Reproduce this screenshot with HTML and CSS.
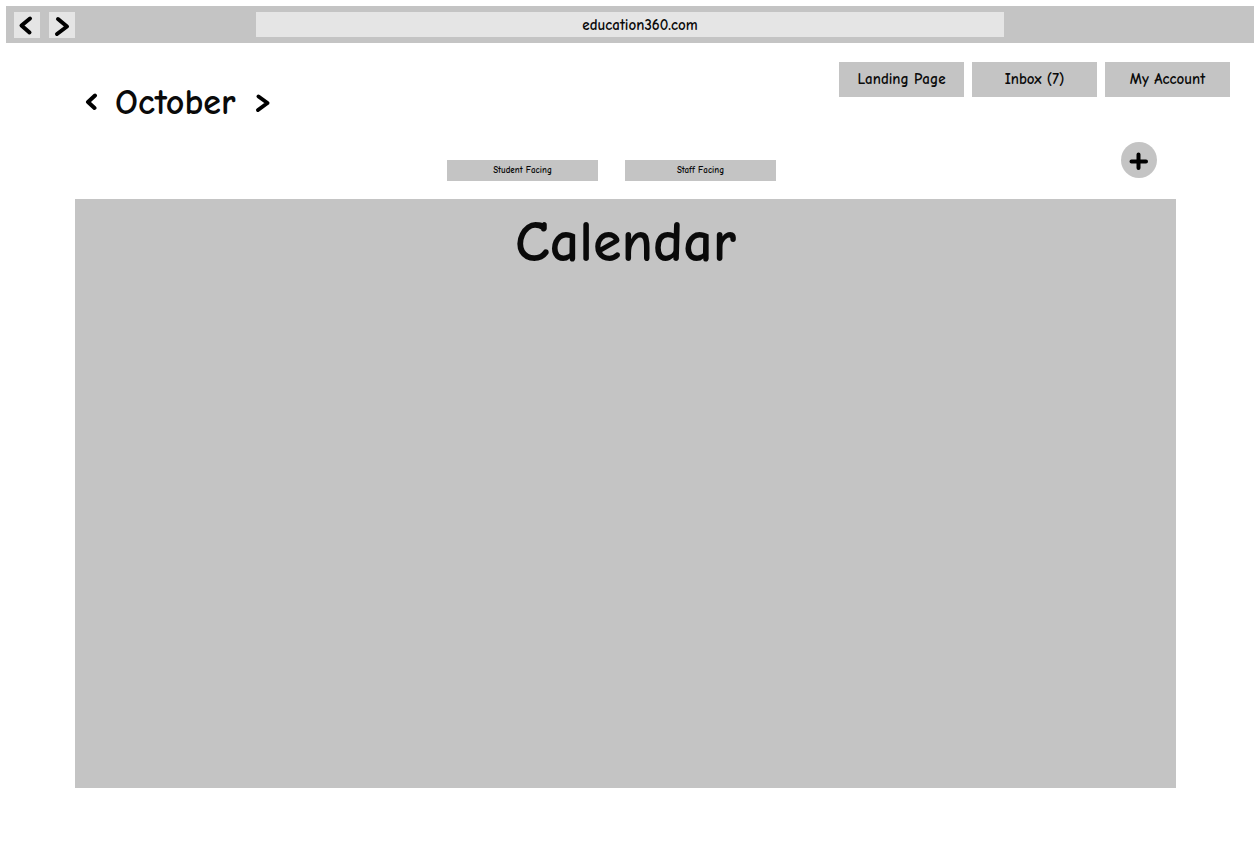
FILE: index.html
```html
<!DOCTYPE html>
<html lang="en">
<head>
  <meta charset="utf-8">
  <meta name="viewport" content="width=device-width, initial-scale=1">
  <title>education360.com</title>
  <link rel="stylesheet" href="styles.css">
</head>
<body>
  <div class="browser">
    <div class="browser-nav">
      <button class="history" type="button" aria-label="Back">
        <svg class="stroke" width="26" height="26" viewBox="0 0 26 26"><path d="M16 6.500 7.500 13.500 15.500 20.500"/></svg>
      </button>
      <button class="history" type="button" aria-label="Forward">
        <svg class="stroke" width="26" height="26" viewBox="0 0 26 26"><path d="M9 7 18 14.500 8 22"/></svg>
      </button>
    </div>
    <input class="address" type="text" value="education360.com" aria-label="Address">
  </div>

  <header class="header">
    <div class="month">
      <button class="step" type="button" aria-label="Previous month">
        <svg class="stroke" width="14" height="20" viewBox="0 0 14 20"><path d="M11 2.500 4 9 10.500 15"/></svg>
      </button>
      <h1 class="month-name">October</h1>
      <button class="step" type="button" aria-label="Next month">
        <svg class="stroke" width="18" height="20" viewBox="0 0 18 20"><path d="M5.500 3.500 14.500 10 5 17"/></svg>
      </button>
    </div>
    <nav class="links">
      <a class="link" href="#">Landing Page</a>
      <a class="link" href="#">Inbox (7)</a>
      <a class="link" href="#">My Account</a>
    </nav>
  </header>

  <div class="toolbar">
    <div class="filters">
      <button class="filter" type="button">Student Facing</button>
      <button class="filter" type="button">Staff Facing</button>
    </div>
    <button class="add" type="button" aria-label="Add event">
      <svg class="stroke" width="36" height="36" viewBox="0 0 36 36"><path d="M10.500 19.500H25M17.500 12.500V26"/></svg>
    </button>
  </div>

  <main class="calendar">
    <h2 class="calendar-title">Calendar</h2>
  </main>
</body>
</html>
```
FILE: styles.css
```css
* {
  box-sizing: border-box;
}

body {
  display: flex;
  flex-direction: column;
  min-height: 100vh;
  margin: 0;
  padding: 6px 6px 66px;
  background: #fff;
  color: #0a0a0a;
  font-family: "Comic Sans MS", "Comic Neue", Lato, sans-serif;
  font-size: 15px;
  font-weight: 700;
}

button,
input {
  margin: 0;
  padding: 0;
  border: 0;
  color: inherit;
  font: inherit;
}

.stroke {
  display: block;
  fill: none;
  stroke: #000;
  stroke-width: 4;
  stroke-linecap: round;
  stroke-linejoin: round;
}

.browser {
  display: grid;
  grid-template-columns: 1fr 3fr 1fr;
  align-items: start;
  padding: 6px 0 5px;
  background: #c4c4c4;
}

.browser-nav {
  display: flex;
  gap: 9px;
  padding-left: 8px;
}

.history {
  background: #e5e5e5;
}

.address {
  width: 100%;
  height: 25px;
  padding-left: 20px;
  background: #e5e5e5;
  text-align: center;
}

.header {
  display: flex;
  justify-content: space-between;
  align-items: flex-start;
  height: 99px;
  padding: 19px 24px 0 78px;
}

.month {
  display: flex;
  align-items: center;
  gap: 17px;
  padding-top: 21px;
}

.step {
  background: none;
}

.month-name {
  margin: 0;
  font-size: 36px;
  font-weight: 700;
  line-height: 40px;
}

.links {
  display: flex;
  gap: 8px;
}

.link {
  width: 125px;
  background: #c4c4c4;
  color: inherit;
  line-height: 35px;
  text-align: center;
  text-decoration: none;
}

.toolbar {
  display: grid;
  grid-template-columns: 1fr auto 1fr;
  margin: 0 78px 18px 69px;
  padding-right: 19px;
}

.filters {
  display: flex;
  grid-column: 2;
  align-self: end;
  gap: 27px;
  margin-right: 9px;
}

.filter {
  width: 151px;
  background: #c4c4c4;
  font-size: 9px;
  line-height: 21px;
}

.add {
  justify-self: end;
  align-self: start;
  margin-bottom: 3px;
  border-radius: 50%;
  background: #c4c4c4;
}

.calendar {
  flex: 1;
  margin: 0 78px 0 69px;
  padding-top: 4px;
  background: #c4c4c4;
}

.calendar-title {
  margin: 0;
  font-size: 58px;
  font-weight: 700;
  line-height: 80px;
  text-align: center;
}
```
